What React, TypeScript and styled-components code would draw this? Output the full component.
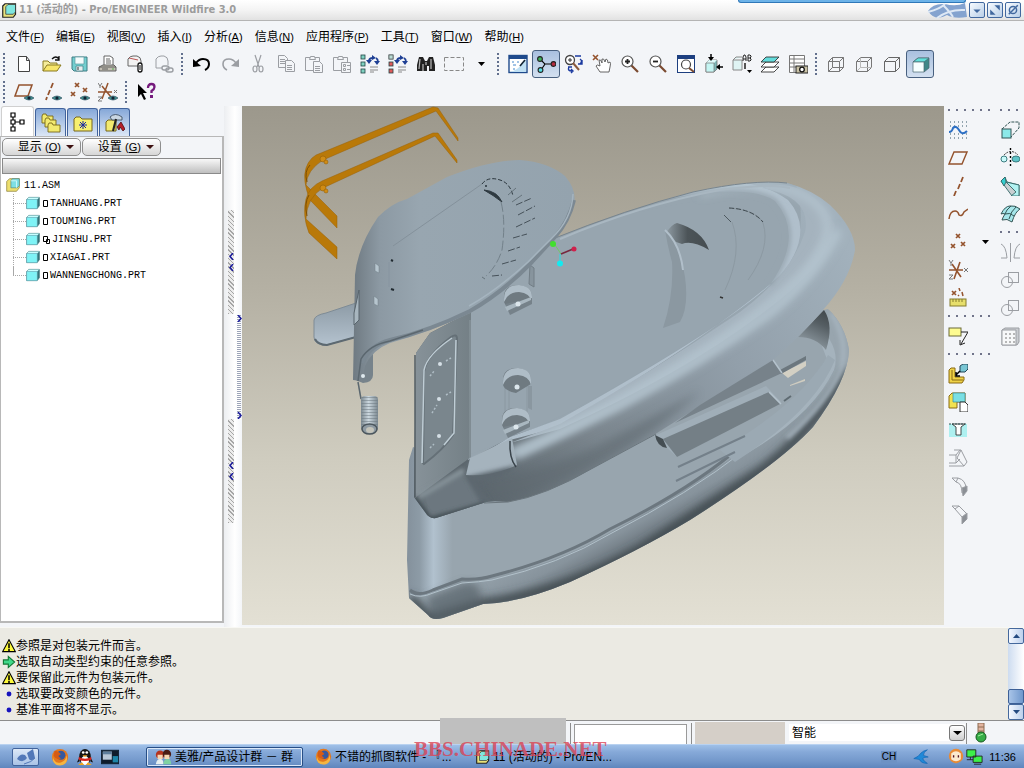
import React from "react";
import styled, { createGlobalStyle, css } from "styled-components";

const GlobalStyle = createGlobalStyle`
  *, *::before, *::after { box-sizing: border-box; }
  body { margin: 0; background: #f3f5f8; overflow-x: hidden; }
  button, input, select { font: inherit; color: inherit; margin: 0; padding: 0; }
  ul { list-style: none; margin: 0; padding: 0; }
`;

const uiFont = `"Liberation Sans", "Noto Sans CJK SC", sans-serif`;

const Page = styled.div`
  position: relative;
  min-height: 100vh;
  display: flex;
  flex-direction: column;
  background: #f3f5f8;
  color: #000;
  font-family: ${uiFont};
  font-size: 12px;
`;

/* ---------- title bar ---------- */

const TitleBar = styled.header`
  height: 21px;
  display: flex;
  align-items: center;
  padding: 0 3px 0 2px;
  gap: 2px;
  background: linear-gradient(#ffffff, #f4f4f4 50%, #e2e2e2);
  border-bottom: 1px solid #b4b4b4;
`;

const Title = styled.h1`
  flex: 1;
  margin: 0;
  font-family: "DejaVu Sans Condensed", "DejaVu Sans", "Noto Sans CJK SC", sans-serif;
  font-size: 11px;
  font-weight: bold;
  line-height: 20px;
  color: #9c9c9c;
  white-space: nowrap;
`;

const WindowButtons = styled.div`
  display: flex;
  gap: 2px;
`;

const WindowButton = styled.button`
  width: 16px;
  height: 16px;
  display: flex;
  align-items: center;
  justify-content: center;
  border: 1px solid #41689f;
  border-radius: 2px;
  background: linear-gradient(135deg, #f7fbff, #b9cfe8);
`;

const DockHandle = styled.div`
  position: absolute;
  top: 0;
  right: 58px;
  width: 228px;
  height: 3px;
  border: 1px solid #2f78b8;
  border-top: 0;
  border-radius: 0 0 4px 4px;
  background: #6db3e8;
`;

/* ---------- menu ---------- */

const MenuBar = styled.nav`
  height: 29px;
  display: flex;
  align-items: center;
  gap: 12px;
  padding: 2px 0 0 6px;
`;

const MenuButton = styled.button`
  border: 0;
  background: none;
  white-space: nowrap;
  line-height: 16px;
`;

const Mnemonic = styled.span`
  font-size: 11px;
`;

/* ---------- toolbars ---------- */

const ToolbarRow = styled.div`
  height: 28px;
  display: flex;
  align-items: center;
`;

const Grip = styled.span<{ $flat?: boolean }>`
  flex: none;
  ${(p) =>
    p.$flat
      ? css`
          height: 10px;
          margin: 0 0 0 4px;
          background: linear-gradient(90deg, #70748a 2px, transparent 2px) 0 3px / 8px 2px repeat-x;
        `
      : css`
          width: 10px;
          height: 22px;
          background: linear-gradient(#62708e 2px, transparent 2px) 3px 0 / 2px 4px repeat-y;
        `}
`;

const ToolButton = styled.button<{ $active?: boolean }>`
  flex: none;
  width: 28px;
  height: 28px;
  display: flex;
  align-items: center;
  justify-content: center;
  border: 1px solid ${(p) => (p.$active ? "#48607f" : "transparent")};
  border-radius: 3px;
  background: ${(p) => (p.$active ? "linear-gradient(#a9c0df, #d3e0f0)" : "none")};
`;

const DropButton = styled.button`
  flex: none;
  width: 26px;
  height: 28px;
  display: flex;
  align-items: center;
  justify-content: center;
  border: 0;
  background: none;
`;

/* ---------- main area ---------- */

const Main = styled.main`
  flex: 1;
  display: flex;
  min-height: 521px;
`;

const ModelTree = styled.section`
  flex: none;
  width: 224px;
  display: flex;
  flex-direction: column;
  padding-bottom: 4px;
`;

const TabRow = styled.div`
  display: flex;
  align-items: flex-end;
  gap: 1px;
  height: 30px;
  padding-left: 1px;
`;

const Tab = styled.button<{ $active?: boolean }>`
  width: ${(p) => (p.$active ? 33 : 31)}px;
  height: ${(p) => (p.$active ? 30 : 28)}px;
  display: flex;
  align-items: center;
  justify-content: center;
  border: 1px solid ${(p) => (p.$active ? "#d0d0d0" : "#41639c")};
  border-bottom: 0;
  border-radius: 3px 3px 0 0;
  background: ${(p) => (p.$active ? "#fff" : "linear-gradient(#86a8d8, #dce7f6)")};
`;

const TreePanel = styled.div`
  flex: 1;
  display: flex;
  flex-direction: column;
  border: 2px solid #b8b8b8;
  border-left-width: 1px;
  border-top-width: 1px;
  background: #fff;
`;

const PanelActions = styled.div`
  display: flex;
  gap: 1px;
  padding: 1px 0 2px 1px;
  background: #f3f5f8;
`;

const PanelButton = styled.button`
  width: 79px;
  height: 18px;
  display: flex;
  align-items: center;
  justify-content: flex-end;
  gap: 5px;
  padding-right: 6px;
  border: 1px solid #8e8e8e;
  border-radius: 5px;
  background: linear-gradient(#ffffff, #d6d6d6);
  line-height: 16px;
  white-space: nowrap;
`;

const TreeHeader = styled.div`
  height: 16px;
  margin: 0 1px 2px;
  border: 1px solid #8a8a8a;
  background: linear-gradient(#f8f8f8, #bfbfbf);
`;

const TreeList = styled.ul`
  font-family: "Liberation Mono", monospace;
  font-size: 10px;
`;

const RootItem = styled.li`
  padding-left: 5px;
`;

const TreeRow = styled.div`
  height: 18px;
  display: flex;
  align-items: center;
  gap: 4px;
`;

const Branch = styled.ul`
  margin-left: 7px;
`;

const Leaf = styled.li`
  height: 18px;
  display: flex;
  align-items: center;
  background:
    linear-gradient(90deg, #a8a8a8 50%, transparent 50%) 0 9px / 2px 1px repeat-x,
    linear-gradient(#a8a8a8 50%, transparent 50%) 0 0 / 1px 2px repeat-y;
  &:last-child {
    background:
      linear-gradient(90deg, #a8a8a8 50%, transparent 50%) 0 9px / 2px 1px repeat-x,
      linear-gradient(#a8a8a8, #a8a8a8) 0 0 / 1px 9px no-repeat;
  }
`;

const LeafContent = styled.span`
  flex: 1;
  display: flex;
  align-items: center;
  gap: 3px;
  margin-left: 13px;
  background: #fff;
`;

const LeafName = styled.span`
  display: flex;
  align-items: center;
  gap: 1px;
`;

const Splitter = styled.div`
  flex: none;
  width: 18px;
  display: flex;
  justify-content: flex-end;
  gap: 3px;
  padding-right: 1px;
  background: linear-gradient(90deg, #eceef1, #ffffff 60%, #f3f5f8);
`;

const SplitterTrack = styled.div<{ $narrow?: boolean }>`
  width: ${(p) => (p.$narrow ? 4 : 6)}px;
  display: flex;
  flex-direction: column;
  justify-content: space-evenly;
`;

const SplitterHandle = styled.div<{ $blue?: boolean }>`
  height: 104px;
  display: flex;
  flex-direction: column;
  align-items: center;
  justify-content: ${(p) => (p.$blue ? "space-between" : "center")};
  gap: 4px;
  background: ${(p) =>
    p.$blue
      ? "repeating-linear-gradient(#9ca4b8 0 1px, #ffffff 1px 2px)"
      : "repeating-linear-gradient(45deg, #a6a6a6 0 1px, #ececec 1px 3px)"};
`;

const Viewport = styled.div`
  flex: 1;
  min-width: 0;
  display: flex;
  margin-bottom: 2px;
  background: linear-gradient(#9c988c, #b4b0a3 35%, #cfccbf 68%, #e3e0d4);
  svg {
    width: 100%;
    height: 100%;
    display: block;
  }
`;

const SideTools = styled.aside`
  flex: none;
  width: 80px;
  display: flex;
  justify-content: space-between;
`;

const SideColumn = styled.div<{ $wide?: boolean }>`
  width: ${(p) => (p.$wide ? 48 : 28)}px;
  display: flex;
  flex-direction: column;
`;

const SideRow = styled.div`
  display: flex;
`;

/* ---------- messages ---------- */

const Messages = styled.section`
  height: 94px;
  display: flex;
  justify-content: space-between;
  background: #ebeae3;
  border-top: 1px solid #f8f8f4;
  border-bottom: 1px solid #8c8c8c;
`;

const MessageList = styled.ul`
  padding: 10px 0 0 2px;
`;

const Message = styled.li`
  height: 16px;
  display: flex;
  align-items: center;
  line-height: 16px;
  white-space: nowrap;
`;

const ScrollBar = styled.div`
  width: 16px;
  display: flex;
  flex-direction: column;
  background: linear-gradient(90deg, #cddcf0, #ffffff);
`;

const ScrollButton = styled.button`
  height: 16px;
  display: flex;
  align-items: center;
  justify-content: center;
  border: 1px solid #44689c;
  border-radius: 2px;
  background: linear-gradient(90deg, #f4f8ff, #bcd0ec);
`;

const ScrollThumb = styled.div`
  height: 15px;
  margin-top: auto;
  border: 1px solid #3c5f96;
  border-radius: 2px;
  background: linear-gradient(90deg, #a8c4e8, #6f97cc);
`;

/* ---------- status bar ---------- */

const StatusBar = styled.section`
  height: 23px;
  display: flex;
  justify-content: flex-end;
  align-items: stretch;
`;

const StatusBlock = styled.div<{ $width: number; $color: string; $raised?: boolean }>`
  width: ${(p) => p.$width}px;
  margin-top: ${(p) => (p.$raised ? -3 : 1)}px;
  background: ${(p) => p.$color};
`;

const Divider = styled.span`
  width: 1px;
  margin: 2px 3px 0 4px;
  background: #8c8c8c;
`;

const StatusInput = styled.input`
  width: 113px;
  margin-top: 3px;
  border: 1px solid #9a9a9a;
  border-bottom: 0;
  background: #fff;
`;

const FilterBox = styled.label`
  display: flex;
  align-items: center;
  width: 176px;
  margin-left: 4px;
  padding: 3px 0;
  background: linear-gradient(#f3f5f8 3px, #fff 3px 20px, #f3f5f8 20px);
`;

const FilterSelect = styled.select`
  flex: 1;
  min-width: 0;
  padding-left: 3px;
  border: 0;
  appearance: none;
  background: none;
  font-size: 12px;
  line-height: 16px;
`;

const FilterArrow = styled.span`
  width: 16px;
  height: 16px;
  display: flex;
  align-items: center;
  justify-content: center;
  border: 1px solid #777;
  border-radius: 3px;
  background: linear-gradient(#fff, #cfcfcf);
`;

const StatusEnd = styled.div`
  width: 59px;
  display: flex;
  align-items: center;
  gap: 4px;
  &::before {
    content: "";
    align-self: stretch;
    width: 1px;
    margin: 2px 0 0 1px;
    background: #8c8c8c;
  }
`;

/* ---------- taskbar ---------- */

const TaskBar = styled.footer`
  height: 24px;
  display: flex;
  align-items: center;
  padding: 0 8px 0 12px;
  background: linear-gradient(#9fc0e8, #86a9d8 30%, #7398cb 70%, #5f86bd);
  border-top: 1px solid #b9d2f0;
`;

const StartButton = styled.button`
  width: 27px;
  height: 18px;
  display: flex;
  align-items: center;
  justify-content: center;
  border: 1px solid #41639c;
  border-radius: 2px;
  background: linear-gradient(#dce8f7, #a9c3e6);
`;

const QuickLaunch = styled.div`
  display: flex;
  gap: 7px;
  margin: 0 27px 0 12px;
`;

const IconButton = styled.button`
  display: flex;
  border: 0;
  background: none;
`;

const Task = styled.button<{ $framed?: boolean; $width: number }>`
  width: ${(p) => p.$width}px;
  height: 20px;
  display: flex;
  align-items: center;
  gap: 3px;
  padding-left: ${(p) => (p.$framed ? 8 : 12)}px;
  border: ${(p) => (p.$framed ? "1px solid #274e86" : "0")};
  border-radius: 2px;
  box-shadow: ${(p) => (p.$framed ? "inset 0 0 0 1px #dbe8f8" : "none")};
  background: none;
  white-space: nowrap;
  line-height: 16px;
`;

const Tray = styled.div`
  display: flex;
  align-items: center;
  margin-left: auto;
`;

const Lang = styled.span`
  padding: 0 1px;
  margin-right: 16px;
  font-size: 10px;
  line-height: 12px;
  background: #6d92c4;
`;

const TrayIcons = styled.div`
  display: flex;
  gap: 1px;
  margin-left: 19px;
`;

const Clock = styled.time`
  margin-left: 6px;
  font-size: 11px;
`;

const Watermark = styled.div`
  position: absolute;
  left: 414px;
  bottom: 7px;
  font-family: "Liberation Serif", serif;
  font-size: 21px;
  font-weight: bold;
  line-height: 24px;
  color: rgba(218, 66, 84, 0.8);
  pointer-events: none;
`;

/* ---------- icons, drawn on a 20 x 20 grid ---------- */

const gray = "#9b9ea3";
const brown = "#94532e";

const eye = (
  <g>
    <path d="M10 16q5-4 10 0q-5 4-10 0z" fill="#3d8b8b" stroke="#356" strokeWidth="0.7" />
    <circle cx="15" cy="16" r="1.6" fill="#123" />
  </g>
);
const hexagons = (c: string) => (
  <g fill={c} stroke="#244" strokeWidth="0.8">
    <rect x="1" y="1" width="4" height="4" />
    <rect x="1" y="8" width="4" height="4" />
    <rect x="1" y="15" width="4" height="4" />
  </g>
);
const cross = (x: number, y: number) => <path d={`M${x - 2} ${y - 2}l4 4m0-4l-4 4`} stroke={brown} strokeWidth="1.7" />;

const glyphs: Record<string, React.ReactNode> = {
  app: (
    <g>
      <path d="M1 4l3-3h14v14l-3 4H1z" fill="#e9e27a" stroke="#222" strokeWidth="1.6" />
      <path d="M5 5l3-3h10v10l-3 3H5z" fill="#7fe6de" stroke="#333" />
    </g>
  ),
  newFile: <path d="M4.500 2.500h8l3 4v11h-11zM12.500 2.500v4h3" fill="#fff" stroke="#444" />,
  open: (
    <g>
      <path d="M1 17V7h5l2 2h7v3" fill="#f4ec9a" stroke="#8a7a20" />
      <path d="M1 17l4-6h14l-4 6z" fill="#f7e66a" stroke="#8a7a20" />
      <path d="M10 5q4-4 7 0M17 2v4h-4" fill="none" stroke="#111" strokeWidth="1.3" />
    </g>
  ),
  save: (
    <g>
      <path d="M2 3h15v14H4l-2-2z" fill="#74cfd0" stroke="#3e7c84" />
      <path d="M5 3h9v7H5z" fill="#f4fbfb" stroke="#5a9aa0" strokeWidth="0.7" />
      <path d="M6 12h7v5H6z" fill="#e8eef0" stroke="#3e7c84" strokeWidth="0.7" />
      <path d="M8 13v3" stroke="#333" />
    </g>
  ),
  print: (
    <g stroke="#555" strokeWidth="0.9">
      <path d="M6 11V2h6l3 2v7" fill="#fff" />
      <path d="M8 5h4M8 7h5M8 9h5" />
      <path d="M1 13l4-2h11l2 2v4H1z" fill="#c2beb3" />
      <path d="M1 13h17" />
      <circle cx="15" cy="15" r="0.8" fill="#4a4" stroke="none" />
      <path d="M4 15h6" />
    </g>
  ),
  mail: (
    <g>
      <path d="M2 12V5q2-3 5-3h4q4 1 4 5v5z" fill="#f2f2f2" stroke="#666" />
      <path d="M3 4l9 2" stroke="#b55" />
      <rect x="12" y="9" width="4" height="9" rx="2" fill="#fff" stroke="#111" strokeWidth="1.3" />
      <path d="M14 11v5" stroke="#111" />
    </g>
  ),
  mailLink: (
    <g fill="none" stroke={gray}>
      <path d="M2 14V5q2-3 5-3h3q4 1 4 5v4M2 14h6" />
      <rect x="8" y="12" width="7" height="4" rx="2" strokeWidth="1.4" />
      <rect x="12" y="14" width="7" height="4" rx="2" strokeWidth="1.4" />
    </g>
  ),
  undo: (
    <g>
      <path d="M4 9q3-4 7-4q6 0 6 5q0 4-4 6" fill="none" stroke="#000" strokeWidth="2" />
      <path d="M1 5v8l8-1z" fill="#000" />
    </g>
  ),
  redo: (
    <g>
      <path d="M16 9q-3-4-7-4q-6 0-6 5q0 4 4 6" fill="none" stroke={gray} strokeWidth="1.6" />
      <path d="M19 5v8l-8-1z" fill={gray} />
    </g>
  ),
  cut: (
    <g fill="none" stroke={gray} strokeWidth="1.2">
      <path d="M7 1l4 12M13 1L9 13" />
      <ellipse cx="7" cy="15" rx="2" ry="3" />
      <ellipse cx="13" cy="15" rx="2" ry="3" />
    </g>
  ),
  copy: (
    <g fill="#f3f5f8" stroke={gray}>
      <path d="M2.500 1.500h6l3 3v9h-9zM4 5.500h5M4 7.500h6M4 9.500h6" />
      <path d="M9.500 6.500h6l3 3v8h-9zM11 11.500h5M11 13.500h5M11 15.500h5" />
    </g>
  ),
  paste: (
    <g fill="#f3f5f8" stroke={gray}>
      <path d="M1.500 3.500h14v13h-14z" />
      <path d="M5.500 5.500l1-3h4l1 3z" />
      <path d="M9.500 7.500h6l3 3v8h-9zM11 12.500h5M11 14.500h5M11 16.500h5" />
    </g>
  ),
  pasteSpecial: (
    <g fill="#f3f5f8" stroke={gray}>
      <path d="M1.500 3.500h14v13h-14z" />
      <path d="M5.500 5.500l1-3h4l1 3z" />
      <path d="M9.500 8.500h9v10h-9z" />
      <path d="M11.500 10.500h2v2h-2zM11.500 14.500h2v2h-2zM15 11.500h3M15 15.500h3" />
    </g>
  ),
  regenerate: (
    <g>
      {hexagons("#7fd0c0")}
      <path d="M9 7q0-3 4-3M16 4q2 1 2 4" fill="none" stroke="#1e3f94" strokeWidth="1.8" />
      <path d="M6 6h6l-3 4zM14 7h6l-3 4zM12 1v5l4-2z" fill="#1e3f94" />
      <path d="M10 13h8M10 16h8M10 18h4" stroke="#888" />
    </g>
  ),
  regenerateAll: (
    <g>
      {hexagons("#e05a5a")}
      <rect x="1" y="1" width="4" height="4" fill="#b8dcd4" stroke="#666" strokeWidth="0.8" />
      <path d="M9 7q0-3 4-3M16 4q2 1 2 4" fill="none" stroke="#1e3f94" strokeWidth="1.8" />
      <path d="M6 6h6l-3 4zM14 7h6l-3 4zM12 1v5l4-2z" fill="#1e3f94" />
      <path d="M10 13h8M10 16h8M10 18h4" stroke="#888" />
    </g>
  ),
  find: (
    <g>
      <path d="M3 3h4l2 4h2l2-4h4l2 8v6h-6v-5h-2v5H1v-6z" fill="#222" />
      <path d="M4 5l-1 10M15 5v10M10 8v3M7 10v7" stroke="#bbb" strokeWidth="1.2" />
    </g>
  ),
  selectBox: <rect x="0.500" y="3.500" width="19" height="13" fill="none" stroke="#888" strokeDasharray="4 2" />,
  repaint: (
    <g>
      <rect x="1" y="1.5" width="18" height="17" fill="#fff" stroke="#1f4a8c" strokeWidth="1.4" />
      <path d="M1 1h18v4H1z" fill="#1f4a8c" />
      <path d="M2 18q7-2 10-6l6-7v13z" fill="#bfe0f4" />
      <path d="M12 12l5-6" stroke="#123" strokeWidth="1.6" />
      <path d="M4 8h2M5 11h3M9 8h2M5 15h2" stroke="#48c" />
    </g>
  ),
  spin: (
    <g stroke="#222" strokeWidth="1.1">
      <path d="M4 5l5 5l-4 6M9 10h8" fill="none" stroke="#000" />
      <circle cx="4" cy="5" r="2.4" fill="#3fb35b" />
      <circle cx="4.500" cy="16" r="2.400" fill="#56e0e4" />
      <circle cx="17.500" cy="10" r="2.400" fill="#b42a3e" />
    </g>
  ),
  orient: (
    <g>
      <circle cx="6" cy="6" r="4.500" fill="#fff" stroke="#444" strokeWidth="1.3" />
      <path d="M6 4v4M4 6h4" stroke="#333" />
      <path d="M9 9l6 7" stroke="#8a5a3c" strokeWidth="2" />
      <path d="M11 2h6M16 5q3 2 0 5M18 6v4h-4M5 13q-2 4 3 4M4 13h4M7 15l2 2l-2 2" fill="none" stroke="#1b3aa0" strokeWidth="1.4" />
    </g>
  ),
  hand: (
    <g>
      <path d="M1 1l5 5m0-5L1 6" stroke={brown} strokeWidth="1.6" />
      <path d="M8 18l-4-6q1-2 4 0L7 6q2-1 3 3l0-4q2-1 3 3l1-3q2 0 2 4l2-1q1 1 0 5l-1 5z" fill="#fff" stroke="#555" strokeWidth="0.9" />
    </g>
  ),
  zoomIn: (
    <g>
      <path d="M11 11l7 7" stroke="#7a4a30" strokeWidth="2.2" />
      <circle cx="7.500" cy="7.500" r="5.500" fill="#fff" stroke="#555" strokeWidth="1.2" />
      <path d="M5 7.500h5M7.500 5v5" stroke="#222" strokeWidth="1.800" />
    </g>
  ),
  zoomOut: (
    <g>
      <path d="M11 11l7 7" stroke="#7a4a30" strokeWidth="2.2" />
      <circle cx="7.500" cy="7.500" r="5.500" fill="#fff" stroke="#555" strokeWidth="1.2" />
      <path d="M5 7.500h5" stroke="#222" strokeWidth="1.800" />
    </g>
  ),
  refit: (
    <g>
      <rect x="1.500" y="1.500" width="17" height="17" fill="#fff" stroke="#1d3f80" />
      <path d="M1 1h18v4H1z" fill="#1d3f80" />
      <circle cx="10" cy="10.500" r="4.500" fill="none" stroke="#444" strokeWidth="1.2" />
      <path d="M13 14l5 4" stroke="#7a4a30" strokeWidth="2" />
    </g>
  ),
  reorient: (
    <g>
      <path d="M2 9l3-3h8v9l-3 3H2z" fill="#7fb9b9" stroke="#666" strokeWidth="0.7" />
      <path d="M2 9l3-3h8l-3 3z" fill="#dffafa" />
      <path d="M2 9h8v9H2z" fill="#c5f5f3" stroke="#777" strokeWidth="0.7" />
      <path d="M7 0v4M19 13h-4" stroke="#000" strokeWidth="1.500" />
      <path d="M4 3h6L7 7zM16 10v6l-4-3z" fill="#000" />
    </g>
  ),
  saved: (
    <g>
      <path d="M1 6l3-3h6M1 6v10h9V6z" fill="#dff4f4" stroke="#888" />
      <path d="M13 9v6" stroke="#555" strokeWidth="2" />
      <path d="M15 16h5l-2.500 3z" fill="#000" />
      <path d="M11 7V3l1-2h1l1 2v4M11 5h3M16 1h2l1 1v1l-1 1l1 1v1l-1 1h-2zM16 4h2" fill="none" stroke="#222" />
    </g>
  ),
  layers: (
    <g stroke="#333" strokeWidth="0.900" fill="#fff">
      <path d="M1 18l5-5h13l-5 5z" />
      <path d="M1 13l5-5h13l-5 5z" />
      <path d="M1 8l5-5h13l-5 5z" fill="#63dcdc" />
    </g>
  ),
  viewManager: (
    <g>
      <path d="M1.500 1.500h15v17h-15zM1 5h15M1 9h15M1 13h15M6 1v17" fill="#fff" stroke="#777" />
      <rect x="8" y="12" width="12" height="7" fill="#c9c2a6" stroke="#222" />
      <circle cx="14" cy="15.500" r="2.300" fill="#fff" stroke="#111" strokeWidth="1.300" />
    </g>
  ),
  wireframe: <path d="M2.500 7.500h11v10h-11zM6.500 3.500h11v10h-11zM2.500 7.500l4-4M13.500 7.500l4-4M2.500 17.500l4-4M13.500 17.500l4-4" fill="none" stroke="#777" />,
  hiddenLine: (
    <g fill="none" stroke="#777">
      <path d="M2.500 7.500h11v10h-11zM2.500 7.500l4-4h11l-4 4M17.500 3.500v10l-4 4" />
      <path d="M6.500 3.500v10h11M6.500 13.500l-4 4" stroke="#b9b9b9" />
    </g>
  ),
  noHidden: <path d="M2.500 7.500h11v10h-11zM2.500 7.500l4-4h11l-4 4M17.500 3.500v10l-4 4" fill="none" stroke="#666" />,
  shaded: (
    <g stroke="#4b6770" strokeWidth="0.700">
      <path d="M3 8l5-4h11v10l-5 4z" fill="#3f8888" />
      <path d="M3 8l5-4h11l-5 4z" fill="#62e0da" />
      <path d="M3 8h11v10H3z" fill="#f6ffff" />
    </g>
  ),
  planeEye: (
    <g>
      <path d="M5 3h13l-4 11H1z" fill="none" stroke={brown} strokeWidth="1.500" />
      {eye}
    </g>
  ),
  axisEye: (
    <g>
      <path d="M11 1L9 6M8 8l-2 5M5 15l-1 3" stroke={brown} strokeWidth="1.800" />
      {eye}
    </g>
  ),
  pointEye: (
    <g>
      {cross(7, 3)}
      {cross(3, 12)}
      {cross(15, 8)}
      {eye}
    </g>
  ),
  csysEye: (
    <g>
      <path d="M0 10h14M10 1L4 17M4 4l9 11" stroke={brown} strokeWidth="1.500" />
      <path d="M0 1l2 3l2-3M2 4v2M16 8l3 3m0-3l-3 3M0 15h4l-4 4h4" fill="none" stroke="#777" />
      {eye}
    </g>
  ),
  whatsThis: (
    <g>
      <path d="M2 2v13l3-3l3 6l2-1l-3-6h4z" fill="#000" />
      <path d="M12 6q0-4 3.500-4q3 0 3 3q0 2-3 4v2" fill="none" stroke="#751a7d" strokeWidth="2.300" />
      <path d="M14 13h3v3h-3z" fill="#751a7d" />
    </g>
  ),
  treeTab: (
    <g fill="#fff" stroke="#000" strokeWidth="1.200">
      <path d="M5 5v10M5 10h9" />
      <path d="M3 1h4v4H3zM3 8h4v4H3zM3 15h4v4H3zM12 8h4v4h-4z" />
    </g>
  ),
  folders: (
    <g fill="#f2ea70" stroke="#77671a" strokeWidth="0.900">
      <path d="M1 3l1-2h3l1 2h6v7H1z" />
      <path d="M4 7l1-2h3l1 2h6v7H4z" />
      <path d="M7 12l1-2h3l1 2h7v7H7z" />
    </g>
  ),
  favorites: (
    <g>
      <path d="M1 18V6l2-2h4l2 2h10v12z" fill="#f7f070" stroke="#77671a" />
      <path d="M10 8v8M6 12h8M7 9l6 6M13 9l-6 6" stroke="#1b2aa0" />
    </g>
  ),
  connections: (
    <g>
      <path d="M1 18V9l2-2h8v11z" fill="#f2ea70" stroke="#77671a" />
      <path d="M5 4q5-5 12 0v3H7z" fill="#c9d6e2" stroke="#345" strokeWidth="0.800" />
      <path d="M11 6l-3 12" stroke="#222" strokeWidth="2" />
      <path d="M12 14l4-5l4 7l-2 2l-3-4l-1 3z" fill="#b5202a" stroke="#400" strokeWidth="0.700" />
    </g>
  ),
  asm: (
    <g>
      <path d="M1 5l4-4h14v13l-4 5H1z" fill="#eddf6e" stroke="#8a7c32" />
      <path d="M7 4l2-3h10v10l-3 3H7z" fill="#7edfe4" stroke="#477" strokeWidth="0.800" />
      <path d="M7 4h8v10" fill="none" stroke="#e9ffff" />
    </g>
  ),
  part: (
    <g strokeLinejoin="round">
      <path d="M1 5l3-3h15v12l-3 4H1z" fill="#34777c" stroke="#2d676d" />
      <path d="M1 5l3-3h15l-3 3z" fill="#c8ffff" />
      <path d="M1 5h15v13H1z" fill="#7ff3f6" stroke="#7ab" strokeWidth="0.600" />
    </g>
  ),
  sketch: (
    <g>
      <path d="M2 2h18M2 18h18M2 6h18M2 14h18" stroke="#356" strokeDasharray="1 3" />
      <path d="M1 12q3 0 4-4q3-3 6 2q3 6 8 1" fill="none" stroke="#2c6fc4" strokeWidth="2" />
    </g>
  ),
  plane: <path d="M6 4h13l-5 12H1z" fill="none" stroke={brown} strokeWidth="1.400" />,
  axis: <path d="M15 1l-2 5M12 8l-2 5M8 15l-2 5" stroke={brown} strokeWidth="1.800" />,
  curve: <path d="M1 15q1-8 6-8q3 0 4 4q3 2 5-3l4-3" fill="none" stroke={brown} strokeWidth="1.500" />,
  points: (
    <g>
      {cross(10, 4)}
      {cross(5, 14)}
      {cross(15, 12)}
    </g>
  ),
  csys: (
    <g>
      <path d="M1 10h14M12 2L6 19M4 4l9 13" stroke={brown} strokeWidth="1.600" />
      <path d="M1 0l2 3l2-3M3 3v3M16 8l4 4m0-4l-4 4M1 15h4l-4 4h4" fill="none" stroke="#777" />
    </g>
  ),
  analysis: (
    <g>
      {cross(6, 5)}
      <path d="M11 0l1 3M14 4l1 4M10 7l1 1" stroke={brown} strokeWidth="1.500" />
      <rect x="2" y="11" width="16" height="7" fill="#e7df6c" stroke="#857c2c" />
      <path d="M5 11v3M8 11v3M11 11v3M14 11v3" stroke="#857c2c" />
    </g>
  ),
  annotation: (
    <g>
      <rect x="1" y="2" width="12" height="8" fill="#fdfb90" stroke="#6b6a38" />
      <path d="M13 6h7l-7 12M12 14v5l5-2" fill="none" stroke="#222" />
    </g>
  ),
  assemble: (
    <g>
      <path d="M1 6l2-2h4v9h9v3l-2 3H1z" fill="#efd247" stroke="#8a6a14" />
      <path d="M4 6v10h11" fill="none" stroke="#8a6a14" />
      <path d="M12 2l3-2h5v5l-3 3h-5z" fill="#79c6d4" stroke="#245" />
      <path d="M12 7l-4 4M8 8v4h4" fill="none" stroke="#000" strokeWidth="1.500" />
    </g>
  ),
  createPart: (
    <g>
      <path d="M1 4l3-3h13v9H9v6H1z" fill="#f1e251" stroke="#8a6a14" />
      <path d="M5 1h12v9H5z" fill="#79dfe4" stroke="#3c8a94" strokeWidth="0.700" />
      <path d="M12 10h5l3 3v7h-8z" fill="#fff" stroke="#333" />
    </g>
  ),
  hole: (
    <g>
      <path d="M1 4h18v13H1z" fill="#aef0f0" />
      <path d="M4 4l4 3v8h5V7l4-3z" fill="#fff" stroke="#333" strokeWidth="0.900" />
      <path d="M1 4h18" stroke="#355" strokeDasharray="2 1" />
    </g>
  ),
  shell: <path d="M6 2h7l6 12l-3 4H1M13 2l-4 8l7 8M1 7h7v8H1M8 7l4-5M8 15l4-4" fill="none" stroke={gray} />,
  round: (
    <g stroke={gray} fill="none">
      <path d="M4 2h6q8 2 8 11l-4 4M4 2l4 4q6 1 6 11M10 2l-2 4" />
      <path d="M14 12l5-2v5l-4 5z" fill="#8b8f95" />
    </g>
  ),
  chamfer: (
    <g stroke={gray} fill="none">
      <path d="M4 2h7l8 8M4 2l3 3l7 8M11 2L7 5" />
      <path d="M14 13l5-4v6l-5 5z" fill="#8b8f95" />
    </g>
  ),
  extrude: (
    <g stroke="#355">
      <path d="M2 9l8-7h9v6l-8 9z" fill="#f3f5f8" strokeDasharray="3 1" />
      <rect x="2" y="9" width="9" height="9" fill="#8ce9e9" />
    </g>
  ),
  revolve: (
    <g stroke="#3b7c80">
      <path d="M4 7q7-7 14 0" fill="none" stroke="#333" strokeDasharray="2 1" />
      <circle cx="4" cy="11" r="3" fill="#c8fafa" />
      <ellipse cx="16" cy="11" rx="4" ry="3" fill="#5fc4c8" />
      <path d="M10.500 0v20" stroke="#000" strokeDasharray="2 2" strokeWidth="1.400" />
    </g>
  ),
  sweepBlend: (
    <g stroke="#366" strokeWidth="0.900">
      <path d="M1 5l4-4l2 5l12 3v11h-7z" fill="#c9cfd2" />
      <path d="M1 5l4-4l1 5l-2 4z" fill="#35cfd0" />
      <path d="M6 6l13 3v11h-8l5-4z" fill="#b2f2f2" />
    </g>
  ),
  boundary: (
    <g stroke="#355" fill="#a5e6ea">
      <path d="M1 10Q5 2 10 2q5-1 10 3q-5 3-8 13q-5-4-10-2q1-3 3-6q-2-1-4 0z" />
      <path d="M5 10q5-2 9 2M11 2q-5 4-6 8M16 3q-5 4-7 12" fill="none" />
    </g>
  ),
  mirror: <path d="M10.500 1v19M1 2q5 2 6 14H1M20 2q-5 2-6 14h6" fill="none" stroke={gray} />,
  merge: (
    <g fill="none" stroke={gray}>
      <circle cx="7" cy="12" r="5.500" />
      <rect x="8.500" y="2.500" width="10" height="10" />
    </g>
  ),
  pattern: (
    <g stroke={gray}>
      <path d="M2 4l3-2h14v14l-2 3H2z" fill="#c9ccd0" />
      <path d="M2 4h14v15H2z" fill="#f7f8f9" />
      <path d="M5 8h10M5 12h10M5 16h10" stroke="#777" strokeDasharray="2 2" />
    </g>
  ),
  warning: (
    <g>
      <path d="M10 1l9 17H1z" fill="#fdf93c" stroke="#000" strokeWidth="1.600" />
      <path d="M10 6v7M10 14v3" stroke="#000" strokeWidth="2.200" />
    </g>
  ),
  prompt: <path d="M2 7h7V2l9 8l-9 8v-5H2z" fill="#41d98a" stroke="#173" strokeWidth="1.600" />,
  info: <circle cx="10" cy="10" r="3.500" fill="#1713bd" />,
  flag: (
    <g>
      <path d="M1 12q3-6 8-4l2 3q-4 6-10 1zM11 6l6-4l2 9q-4 4-6 1z" fill="#5278b8" />
      <path d="M8 17q8-2 11-6" stroke="#5278b8" fill="none" />
    </g>
  ),
  firefox: (
    <g>
      <circle cx="10" cy="10" r="9" fill="#e3771c" />
      <circle cx="11" cy="8" r="5" fill="#35589e" />
      <path d="M2 6q0 12 9 10q6-2 6-8q3 8-4 11q-8 2-11-5z" fill="#f6b541" />
      <path d="M4 3q4 0 7 4l-3 2l3 3q-5 2-8-3z" fill="#d65b14" />
    </g>
  ),
  qq: (
    <g>
      <ellipse cx="10" cy="10" rx="6.500" ry="9" fill="#151515" />
      <path d="M4 10l-3 6l3-1zM16 10l3 6l-3-1z" fill="#151515" />
      <ellipse cx="10" cy="14" rx="4.500" ry="5" fill="#fff" />
      <path d="M3 10q7 4 14 0v3q-7 3-14 0z" fill="#d6231d" />
      <circle cx="8" cy="5" r="1.500" fill="#fff" />
      <circle cx="12" cy="5" r="1.500" fill="#fff" />
      <path d="M7 8h6l-3 2zM3 18l4-2l2 3H3zM17 18l-4-2l-2 3h6z" fill="#f2a51d" />
    </g>
  ),
  desktop: (
    <g>
      <rect x="0.500" y="2.500" width="19" height="15" fill="#101c2c" stroke="#123" />
      <rect x="2" y="4" width="10" height="9" fill="#b9c8d8" />
      <path d="M2 4h10v3H2z" fill="#5e7e9c" />
      <rect x="13" y="9" width="6" height="7" fill="#1e85a8" />
    </g>
  ),
  people: (
    <g>
      <circle cx="6" cy="8" r="5" fill="#b5331d" />
      <circle cx="14" cy="7" r="5" fill="#4a1b14" />
      <path d="M3 8h6v5H3zM11 8h6v5h-6z" fill="#f6d6b2" />
      <path d="M1 19q1-6 5-6q4 0 4 6z" fill="#e6efef" />
      <path d="M10 19q0-6 5-6q4 0 4 6z" fill="#7fd2a2" />
    </g>
  ),
  bird: <path d="M1 12q6-2 9-7q3-3 8-4q-5 3-5 7l6 2q-5 0-7 2q2 4 6 6q-8 0-10-5z" fill="#2089d8" stroke="#1163b0" strokeWidth="0.800" />,
  face: (
    <g>
      <circle cx="10" cy="10" r="9" fill="#e98b36" />
      <path d="M4 7q6-6 12 0v7q-6 5-12 0z" fill="#fbe9cf" />
      <path d="M7 9v3M13 9v3" stroke="#512" strokeWidth="1.700" />
    </g>
  ),
  network: (
    <g stroke="#222">
      <path d="M2 2h10v8H2zM9 9h10v7H9z" fill="#3cf04a" />
      <path d="M2 13h7M10 18h8M6 10v3" />
    </g>
  ),
  light: (
    <g>
      <rect x="7" y="0" width="6" height="10" fill="#e2b4a0" stroke="#8c6a50" />
      <path d="M7 4h6M7 8h6" stroke="#8c6a50" />
      <circle cx="10" cy="14" r="5" fill="#36ad46" stroke="#14571e" />
      <path d="M7 13l5-2" stroke="#a5eba0" />
    </g>
  ),
  minimize: <path d="M4 9h12l-6 6z" fill="#41689f" />,
  restore: <path d="M9 2h9v9zM2 9v9h9z" fill="#41689f" />,
  close: (
    <g fill="none" stroke="#41689f" strokeWidth="2.500">
      <circle cx="10" cy="10" r="6" />
      <path d="M3 17L18 2" />
    </g>
  ),
};

const Icon = ({ name, size = 20 }: { name: string; size?: number }) => (
  <svg width={size} height={size} viewBox="0 0 20 20" fill="none" aria-hidden="true">
    {glyphs[name]}
  </svg>
);

const Arrow = ({ dir = "down", w = 7, color = "#000" }: { dir?: "down" | "up"; w?: number; color?: string }) => (
  <svg width={w} height="4" viewBox="0 0 8 4" preserveAspectRatio="none" aria-hidden="true">
    <path d={dir === "down" ? "M0 0h8L4 4z" : "M0 4h8L4 0z"} fill={color} />
  </svg>
);

const Chevron = ({ right = false }: { right?: boolean }) => (
  <svg width="5" height="7" viewBox="0 0 5 7" aria-hidden="true">
    <path d={right ? "M1 0l3 3.500l-3 3.500" : "M4 0l-3 3.500l3 3.500"} fill="none" stroke="#1a1a9c" strokeWidth="1.500" />
  </svg>
);

/* ---------- 3D model ---------- */

const Lug = ({ x, y, split }: { x: number; y: number; split?: boolean }) => (
  <g transform={`translate(${x} ${y})`}>
    <path d="M-14 1Q-15-13 0-13Q14-12 14-1V3L-1 12Q-12 10-14 4z" fill="#6f7a81" />
    <path d="M-14 1Q-14-13 1-13Q14-12 14-1V4Q12-5 1-6Q-10-6-14 4z" fill="#afbdc7" />
    {split && (
      <g>
        <path d="M-13 6L14 0V6L-8 17z" fill="#76828a" />
        <path d="M-13 9L13 -1V2L-11 13z" fill="#a9b7c0" />
      </g>
    )}
    <circle cx="0" cy="6" r="2.500" fill="#dce6ec" />
  </g>
);

const ModelView = () => (
  <svg viewBox="242 106 702 519" role="img" aria-label="11.ASM">
    <defs>
      <linearGradient id="flap" x1="0" x2="1">
        <stop offset="0" stopColor="#6f7a82" />
        <stop offset="0.120" stopColor="#8c99a3" />
        <stop offset="0.300" stopColor="#98a6b0" />
        <stop offset="1" stopColor="#94a3ae" />
      </linearGradient>
      <linearGradient id="tab" x1="0" y1="0" x2="0" y2="1">
        <stop offset="0" stopColor="#8d9ba6" />
        <stop offset="1" stopColor="#b4c2ce" />
      </linearGradient>
      <linearGradient id="side" gradientUnits="userSpaceOnUse" x1="470" y1="490" x2="850" y2="250">
        <stop offset="0" stopColor="#5a646b" />
        <stop offset="0.300" stopColor="#7b868e" />
        <stop offset="0.650" stopColor="#929faa" />
        <stop offset="1" stopColor="#a2b1bc" />
      </linearGradient>
      <linearGradient id="front" gradientUnits="userSpaceOnUse" x1="414" y1="0" x2="480" y2="0">
        <stop offset="0" stopColor="#879299" />
        <stop offset="1" stopColor="#717d83" />
      </linearGradient>
      <linearGradient id="base" gradientUnits="userSpaceOnUse" x1="407" y1="0" x2="470" y2="0">
        <stop offset="0" stopColor="#84919c" />
        <stop offset="0.200" stopColor="#8d9ba6" />
        <stop offset="0.420" stopColor="#b1c1ce" />
        <stop offset="0.720" stopColor="#98a5ae" />
      </linearGradient>
      <linearGradient id="baseSide" gradientUnits="userSpaceOnUse" x1="610" y1="500" x2="645" y2="565">
        <stop offset="0" stopColor="#98a5ae" />
        <stop offset="0.450" stopColor="#87939c" />
        <stop offset="0.850" stopColor="#5c666d" />
        <stop offset="1" stopColor="#454d52" />
      </linearGradient>
      <linearGradient id="pit" x1="0" y1="0" x2="1" y2="0">
        <stop offset="0" stopColor="#909ca4" />
        <stop offset="0.500" stopColor="#4c5458" />
        <stop offset="1" stopColor="#454c50" />
      </linearGradient>
      <linearGradient id="gap" x1="0.300" y1="1" x2="0.700" y2="0">
        <stop offset="0" stopColor="#98a4ac" />
        <stop offset="0.700" stopColor="#555e63" />
        <stop offset="1" stopColor="#444b4f" />
      </linearGradient>
      <linearGradient id="coil" x1="0" x2="1">
        <stop offset="0" stopColor="#7b8890" />
        <stop offset="0.450" stopColor="#cbd7de" />
        <stop offset="1" stopColor="#7b8890" />
      </linearGradient>
      <filter id="soft4" x="-20%" y="-20%" width="140%" height="140%">
        <feGaussianBlur stdDeviation="4" />
      </filter>
      <filter id="soft2" x="-20%" y="-20%" width="140%" height="140%">
        <feGaussianBlur stdDeviation="2" />
      </filter>
      <clipPath id="coverClip">
        <path d="M416 353L430 333L470 312L550 240Q627 209 693 192Q753 179 787 183Q813 190 830 205Q855 229 855 250Q850 280 823 310Q802 335 773 360L657 433L593 468Q545 496 507 502Q490 500 483 503L436 518Q429 519 425 512L414 497z" />
      </clipPath>
      <clipPath id="baseClip">
        <path d="M413 447L500 480L800 315L828 309Q845 325 849 350Q848 380 813 427Q780 463 690 520Q640 550 570 582Q520 603 483 604L443 618Q432 621 428 615L409 598L407 560L409 460z" />
      </clipPath>
    </defs>

    {/* lower housing */}
    <g clipPath="url(#baseClip)">
      <path d="M400 300H860V630H400z" fill="url(#base)" />
      <path d="M410 593Q420 599 430 593L462 582Q480 580 490 578Q560 562 600 538Q690 490 750 444Q820 390 838 345L828 305L870 300V640H400z" fill="url(#baseSide)" />
      <path d="M410 597L430 619L480 604Q560 594 640 550L763 470Q815 428 849 370" fill="none" stroke="#3e464b" strokeWidth="9" filter="url(#soft4)" />
      <path d="M427 597L466 582Q485 582 480 607L430 622z" fill="#59636a" opacity=".7" filter="url(#soft4)" />
      <path d="M410 590Q418 597 433 590L462 579Q480 580 492 576Q560 559 610 529Q690 490 740 447Q800 404 826 362" fill="none" stroke="#6c777f" strokeWidth="3" />
      <path d="M410 594Q420 599 433 593L462 583Q480 582 492 580Q560 564 610 534Q690 493 745 450" fill="none" stroke="#b2c1ca" strokeWidth="1" />
      <path d="M812 320Q842 345 834 370Q810 420 735 460Q820 400 828 362z" fill="#a5b3bd" />
      <path d="M720 450Q800 404 828 355L835 360Q815 410 735 462z" fill="#9ba9b3" />
      <path d="M831 313Q849 340 841 370Q826 403 787 438" fill="none" stroke="#a8b6c0" strokeWidth="4" filter="url(#soft2)" />
    </g>
    <path d="M798 337L824 310Q834 325 826 350Q816 337 798 337z" fill="url(#gap)" />
    <path d="M782 373L806 361V366L788 378z" fill="#d3d0c4" />
    <path d="M790 385L805 379V381L790 386z" fill="#cfccc0" />
    <path d="M784 401L791 396" stroke="#5f6b72" strokeWidth="2" />
    <path d="M780 370L806 356V360L781 374z" fill="#6c777e" />

    {/* upper cover */}
    <g clipPath="url(#coverClip)">
      <path d="M400 170H870V530H400z" fill="url(#side)" />
      <path d="M470 200L560 150H780Q805 190 800 230Q790 275 740 315Q650 370 560 420L515 435L468 460z" fill="#97a5af" />
      <path d="M640 195Q740 165 788 200Q815 230 783 273Q720 330 560 427L510 440L468 463L510 437L560 419Q720 330 770 285Q805 235 775 201Q745 180 640 205z" fill="#b0bfcb" />
      <path d="M762 188Q812 197 805 232Q792 273 740 312Q650 373 560 424L510 443L560 429Q680 375 760 315Q829 265 835 225Q808 175 762 188z" fill="#a5b3be" />
      <path d="M700 192Q778 174 814 202Q843 224 808 268Q760 320 640 389Q580 425 518 451L474 468" fill="none" stroke="#b4c4cf" strokeWidth="7" filter="url(#soft4)" />
      <path d="M640 205Q745 180 775 201Q805 235 770 285" fill="none" stroke="#97a5af" strokeWidth="4" filter="url(#soft2)" />
      <path d="M838 230Q817 274 770 313Q700 363 620 405L515 455" fill="none" stroke="#b4c4cf" strokeWidth="9" filter="url(#soft4)" />
      <path d="M482 477Q530 475 595 447L700 391Q610 477 490 505z" fill="#5d676e" opacity=".55" filter="url(#soft4)" />
      <path d="M560 239Q640 205 720 190Q770 183 790 188" fill="none" stroke="#a9b7c1" strokeWidth="2" />
      <path d="M414 351L430 333L471 312V457L415 498z" fill="url(#front)" />
      <path d="M425 494L462 471L487 503L430 520z" fill="#606b72" />
      <path d="M415 498L462 470L472 458L461 471L489 504L430 520z" fill="#78848b" opacity=".5" filter="url(#soft2)" />
      <path d="M418 497L464 470" stroke="#88949b" strokeWidth="5" filter="url(#soft2)" />
      <path d="M470 458L512 438L517 465Q490 477 466 475z" fill="#a5b3bd" />
      <path d="M466 477L517 465Q502 480 476 481L491 504L482 505z" fill="#5d686f" filter="url(#soft2)" />
      <path d="M510 441Q509 458 516 467" fill="none" stroke="#39434a" strokeWidth="1.500" />
      <path d="M414 498L430 520L484 505" fill="none" stroke="#414b51" strokeWidth="5" filter="url(#soft2)" />
    </g>
    <path d="M470 320V458" stroke="#8c989f" />
    <path d="M484 503L508 502Q545 496 593 468L656 434" fill="none" stroke="#6b767d" />
    <path d="M415 355V497" stroke="#535e64" strokeWidth="1.500" />
    <path d="M550 240Q627 209 693 192Q753 179 787 183" fill="none" stroke="#79858d" />

    {/* recesses in the cover */}
    <path d="M666 233Q672 224 677 223Q702 230 709 250Q692 240 682 244Q670 241 666 233z" fill="url(#pit)" />
    <path d="M665 230Q680 244 685 277Q689 307 680 322L663 328Q674 295 672 262Q668 248 665 230z" fill="#8b98a1" />
    <path d="M665 230Q680 244 683 270" fill="none" stroke="#b1bfca" strokeWidth="2" />
    <path d="M729 208Q758 210 763 223Q771 248 748 280" fill="none" stroke="#8c99a2" />
    <path d="M729 208Q752 209 763 222" fill="none" stroke="#3e484e" strokeDasharray="5 2" />
    <path d="M732 222Q743 252 725 290" fill="none" stroke="#8c99a2" />
    <path d="M724 215l7 7" stroke="#4e5a61" />
    <path d="M720 297l3 1" stroke="#333" strokeWidth="1.500" />

    {/* battery bars */}
    <path d="M773 360L782 373L675 423L700 405z" fill="#77828a" />
    <path d="M654 436L766 386L781 402L677 457z" fill="#a0aeb8" />
    <path d="M663 439L769 392L780 404L677 457z" fill="#747f86" />
    <path d="M655 435L663 439L667 448Q657 447 655 435z" fill="#454e53" />
    <path d="M773 360L782 373M769 392L781 404" stroke="#b4c2cc" strokeWidth="1.500" />
    <path d="M678 467L745 436M676 481L735 452" stroke="#74808a" strokeWidth="2" />

    {/* label plate */}
    <path d="M423 463L424 372Q426 356 451 337Q457 333 457 339L453 435Q444 449 424 464z" fill="#7a868d" stroke="#657077" strokeWidth="2" />
    <path d="M422 463L424 370Q427 355 452 338" fill="none" stroke="#bfcdd5" strokeWidth="1.500" />
    <path d="M456 340L454 433L444 445" fill="none" stroke="#bfcdd5" strokeWidth="1.500" />
    <path d="M430 376l5-6M432 413l5-8M430 448l4-4M446 361l5-3M446 395l5-3" stroke="#b0bec6" strokeDasharray="2 2" strokeWidth="1.500" />
    <circle cx="440" cy="364" r="2" fill="#d5e0e6" />
    <circle cx="439" cy="399" r="2" fill="#d5e0e6" />
    <circle cx="439" cy="436" r="2" fill="#d5e0e6" />

    {/* hinges */}
    <path d="M505 386V415M509 388V412M527 386V412" stroke="#8b98a1" />
    <path d="M528 386h4v24l-4 -2z" fill="#8a97a0" />
    <path d="M530 265L534 268V287L529 284z" fill="#87949d" stroke="#727e86" />
    <Lug x={518} y={298} split />
    <Lug x={517} y={381} />
    <Lug x={516} y={421} split />

    {/* flap */}
    <path d="M314 320Q315 315 326 313L356 303V337L326 345Q314 345 314 337z" fill="url(#tab)" stroke="#7e8b95" />
    <path d="M315 339Q318 345 327 345L356 337" fill="none" stroke="#5d6971" strokeWidth="2" />
    <path d="M360 354L373 352V375Q373 382 363 383L353 379z" fill="#77838b" />
    <path d="M353 380L355 275Q358 246 378 217Q392 203 407 199L447 177Q490 160 520 160Q548 162 565 176Q577 190 574 204Q570 222 557 237L533 262Q503 294 470 313Q430 332 390 343Q372 350 365 366L362 381z" fill="url(#flap)" />
    <path d="M574 200Q569 221 555 237L532 262Q502 293 470 311Q429 331 390 340Q370 345 362 363" fill="none" stroke="#7b8892" strokeWidth="4" />
    <path d="M573 194Q572 219 551 239L528 262Q496 291 469 306" fill="none" stroke="#a5b4bf" strokeWidth="1.500" />
    <path d="M358 381L361 359Q369 345 390 341L423 330" fill="none" stroke="#5b676f" strokeWidth="1.500" />
    <path d="M393 246L482 184" fill="none" stroke="#84919b" />
    <path d="M482 184Q488 176 500 180q10 3 13 16" fill="none" stroke="#29343b" strokeDasharray="4 2" />
    <circle cx="486" cy="186" r="1" fill="#29343b" />
    <path d="M484 190Q497 191 502 202Q493 195 484 190z" fill="#2f3a41" stroke="#2f3a41" />
    <path d="M501 202Q506 221 502 250Q497 266 486 276" fill="none" stroke="#73818a" strokeDasharray="10 3" />
    <path d="M516 205l16-7M518 215l17-9M516 227l19-9M513 238l14-4M508 251l12-4M502 264l14-4M492 276l10-1" stroke="#465159" strokeDasharray="7 2" />
    <path d="M508 195l8-7M512 202l10-7M482 277l3 2" stroke="#66737b" />
    <path d="M375 263l4 3v7l-4-2zM374 296l4 3v7l-4-2z" fill="#b6c5ce" stroke="#717f87" strokeWidth="0.500" />
    <path d="M391 260l2 1M391 289l3 1" stroke="#202a30" strokeWidth="2" />
    <path d="M389 262V287" stroke="#8794a0" />
    <path d="M359 290L354 313V325L359 320z" fill="#a8b6bf" stroke="#59656d" />
    <circle cx="363" cy="376" r="2" fill="#dfe9ee" />

    {/* spring */}
    <path d="M358 382L361 399" stroke="#5b676f" strokeWidth="1.500" />
    <rect x="361" y="396" width="17" height="35" rx="4" fill="url(#coil)" />
    <path d="M369.500 397V426" stroke="#6b777f" strokeWidth="16" strokeDasharray="1 2" opacity=".5" />
    <ellipse cx="369.500" cy="429" rx="7.500" ry="5" fill="#8e9aa2" stroke="#4a555c" strokeWidth="1.500" />
    <ellipse cx="370" cy="430" rx="4" ry="3" fill="#c4c4ba" />

    {/* contact springs */}
    <g fill="#b97909" stroke="#986006" strokeWidth="0.500">
      <path d="M433 107L438 108L458 138V141L436 111L323 160Q307 170 306 185L337 216V228L310 200Q302 180 306 168Q310 156 321 153z" />
      <path d="M433 133L438 133L457 160V163L435 136L323 188Q307 197 306 219L337 247V259L309 233Q302 215 306 199Q309 187 322 181z" />
    </g>
    <g fill="#d08c14" stroke="#8a5704" strokeWidth="0.500">
      <circle cx="323" cy="159" r="3" />
      <circle cx="323" cy="188" r="3" />
      <circle cx="326" cy="162" r="2" />
      <circle cx="326" cy="191" r="2" />
    </g>
    <path d="M307 182Q304 171 310 165M307 216Q304 203 309 195" fill="none" stroke="#7c4e04" />

    {/* spin centre */}
    <path d="M561 254L555 245" stroke="#72c868" />
    <path d="M561 254L573 249" stroke="#78263e" strokeWidth="1.500" />
    <path d="M560 254V263" stroke="#4ccbd2" strokeWidth="1.500" />
    <circle cx="553" cy="244" r="3" fill="#42df2e" />
    <circle cx="574" cy="249" r="2.500" fill="#cf214c" />
    <circle cx="560" cy="263.500" r="3" fill="#14eaf0" />
  </svg>
);

/* ---------- data ---------- */

const menus: [string, string][] = [
  ["文件", "F"], ["编辑", "E"], ["视图", "V"], ["插入", "I"], ["分析", "A"],
  ["信息", "N"], ["应用程序", "P"], ["工具", "T"], ["窗口", "W"], ["帮助", "H"],
];

const fileTools = ["newFile", "open", "save", "print", "mail", "mailLink"];
const editTools = ["undo", "redo", "cut", "copy", "paste", "pasteSpecial", "regenerate", "regenerateAll", "find", "selectBox"];
const viewTools = ["repaint", "spin", "orient", "hand", "zoomIn", "zoomOut", "refit", "reorient", "saved", "layers", "viewManager"];
const displayTools = ["wireframe", "hiddenLine", "noHidden", "shaded"];
const datumTools = ["planeEye", "axisEye", "pointEye", "csysEye"];

const parts = [
  { name: "TANHUANG.PRT" },
  { name: "TOUMING.PRT" },
  { name: "JINSHU.PRT", packaged: true },
  { name: "XIAGAI.PRT" },
  { name: "WANNENGCHONG.PRT" },
];

const messages: [string, string][] = [
  ["warning", "参照是对包装元件而言。"],
  ["prompt", "选取自动类型约束的任意参照。"],
  ["warning", "要保留此元件为包装元件。"],
  ["info", "选取要改变颜色的元件。"],
  ["info", "基准平面将不显示。"],
];

const Tools = ({ names, active }: { names: string[]; active?: string }) => (
  <>
    {names.map((n, i) => (
      <ToolButton key={n + i} aria-label={n} $active={n === active}>
        <Icon name={n} />
      </ToolButton>
    ))}
  </>
);

const PartMarker = ({ packaged }: { packaged?: boolean }) => (
  <svg width={packaged ? 8 : 6} height="9" viewBox={packaged ? "0 0 8 9" : "0 0 6 9"} aria-hidden="true">
    <path d={packaged ? "M.5 1.500h4v5h-4zM3.500 4.500h3v4h-3z" : "M.5 1.500h4v6h-4z"} fill="#fff" stroke="#000" />
  </svg>
);

export default function App() {
  return (
    <Page>
      <GlobalStyle />
      <TitleBar>
        <Icon name="app" size={15} />
        <Title>11 (活动的) - Pro/ENGINEER Wildfire 3.0</Title>
        <svg width="40" height="20" viewBox="0 0 40 20" aria-hidden="true">
          <path d="M1 11Q6 3 18 4q11 3 20-1l2 14q-13 2-20-2Q8 22 1 11z" fill="#84a3cf" />
          <path d="M1 12q12-3 17-8M16 5q7 7 10 12M10 18q12-9 28-8" fill="none" stroke="#dde8f5" strokeWidth="2" />
        </svg>
        <WindowButtons>
          <WindowButton aria-label="最小化"><Icon name="minimize" size={12} /></WindowButton>
          <WindowButton aria-label="还原"><Icon name="restore" size={12} /></WindowButton>
          <WindowButton aria-label="关闭"><Icon name="close" size={12} /></WindowButton>
        </WindowButtons>
        <DockHandle />
      </TitleBar>

      <MenuBar>
        {menus.map(([label, key]) => (
          <MenuButton key={key}>{label}<Mnemonic>(<u>{key}</u>)</Mnemonic></MenuButton>
        ))}
      </MenuBar>

      <ToolbarRow>
        <Grip />
        <Tools names={fileTools} />
        <Grip />
        <Tools names={editTools} />
        <DropButton aria-label="选取"><Arrow /></DropButton>
        <Grip />
        <Tools names={viewTools} active="spin" />
        <Grip />
        <Tools names={displayTools} active="shaded" />
      </ToolbarRow>
      <ToolbarRow>
        <Grip />
        <Tools names={datumTools} />
        <Grip />
        <Tools names={["whatsThis"]} />
      </ToolbarRow>

      <Main>
        <ModelTree>
          <TabRow>
            <Tab $active aria-label="模型树"><Icon name="treeTab" /></Tab>
            <Tab aria-label="文件夹"><Icon name="folders" /></Tab>
            <Tab aria-label="收藏夹"><Icon name="favorites" /></Tab>
            <Tab aria-label="连接"><Icon name="connections" /></Tab>
          </TabRow>
          <TreePanel>
            <PanelActions>
              <PanelButton><span>显示 <Mnemonic>(<u>O</u>)</Mnemonic></span><Arrow w={8} color="#3c1010" /></PanelButton>
              <PanelButton><span>设置 <Mnemonic>(<u>G</u>)</Mnemonic></span><Arrow w={8} color="#3c1010" /></PanelButton>
            </PanelActions>
            <TreeHeader />
            <TreeList>
              <RootItem>
                <TreeRow><Icon name="asm" size={14} />11.ASM</TreeRow>
                <Branch>
                  {parts.map((p) => (
                    <Leaf key={p.name}>
                      <LeafContent>
                        <Icon name="part" size={14} />
                        <LeafName><PartMarker packaged={p.packaged} />{p.name}</LeafName>
                      </LeafContent>
                    </Leaf>
                  ))}
                </Branch>
              </RootItem>
            </TreeList>
          </TreePanel>
        </ModelTree>

        <Splitter>
          <SplitterTrack>
            <SplitterHandle><Chevron /><Chevron /></SplitterHandle>
            <SplitterHandle><Chevron /><Chevron /></SplitterHandle>
          </SplitterTrack>
          <SplitterTrack $narrow>
            <SplitterHandle $blue><Chevron right /><Chevron right /></SplitterHandle>
          </SplitterTrack>
        </Splitter>

        <Viewport><ModelView /></Viewport>

        <SideTools>
          <SideColumn $wide>
            <Grip $flat />
            <Tools names={["sketch", "plane", "axis", "curve"]} />
            <SideRow>
              <Tools names={["points"]} />
              <DropButton aria-label="基准点"><Arrow /></DropButton>
            </SideRow>
            <Tools names={["csys", "analysis"]} />
            <Grip $flat />
            <Tools names={["annotation"]} />
            <Grip $flat />
            <Tools names={["assemble", "createPart", "hole", "shell", "round", "chamfer"]} />
          </SideColumn>
          <SideColumn>
            <Grip $flat />
            <Tools names={["extrude", "revolve", "sweepBlend", "boundary"]} />
            <Grip $flat />
            <Tools names={["mirror", "merge", "merge", "pattern"]} />
          </SideColumn>
        </SideTools>
      </Main>

      <Messages>
        <MessageList>
          {messages.map(([icon, text]) => (
            <Message key={text}><Icon name={icon} size={14} />{text}</Message>
          ))}
        </MessageList>
        <ScrollBar>
          <ScrollButton aria-label="向上"><Arrow dir="up" color="#244a80" /></ScrollButton>
          <ScrollThumb />
          <ScrollButton aria-label="向下"><Arrow color="#244a80" /></ScrollButton>
        </ScrollBar>
      </Messages>

      <StatusBar>
        <StatusBlock $width={126} $color="#bfbfbf" $raised />
        <Divider />
        <StatusInput aria-label="状态" readOnly />
        <Divider />
        <StatusBlock $width={90} $color="#d5cfc8" />
        <FilterBox>
          <FilterSelect aria-label="选取过滤器" defaultValue="智能">
            <option>智能</option>
          </FilterSelect>
          <FilterArrow><Arrow w={9} /></FilterArrow>
        </FilterBox>
        <StatusEnd><Icon name="light" /></StatusEnd>
      </StatusBar>

      <TaskBar>
        <StartButton aria-label="开始"><Icon name="flag" /></StartButton>
        <QuickLaunch>
          <IconButton aria-label="Firefox"><Icon name="firefox" size={18} /></IconButton>
          <IconButton aria-label="QQ"><Icon name="qq" size={18} /></IconButton>
          <IconButton aria-label="桌面"><Icon name="desktop" size={18} /></IconButton>
        </QuickLaunch>
        <Task $framed $width={157}><Icon name="people" size={17} />美雅/产品设计群 － 群</Task>
        <Task $width={161}><Icon name="firefox" size={17} />不错的抓图软件 - 『...</Task>
        <Task $width={160}><Icon name="app" size={14} />11 (活动的) - Pro/EN...</Task>
        <Tray>
          <Lang>CH</Lang>
          <Icon name="bird" size={16} />
          <TrayIcons><Icon name="face" size={16} /><Icon name="network" size={18} /></TrayIcons>
          <Clock>11:36</Clock>
        </Tray>
      </TaskBar>
      <Watermark>BBS.CHINADE.NET</Watermark>
    </Page>
  );
}
